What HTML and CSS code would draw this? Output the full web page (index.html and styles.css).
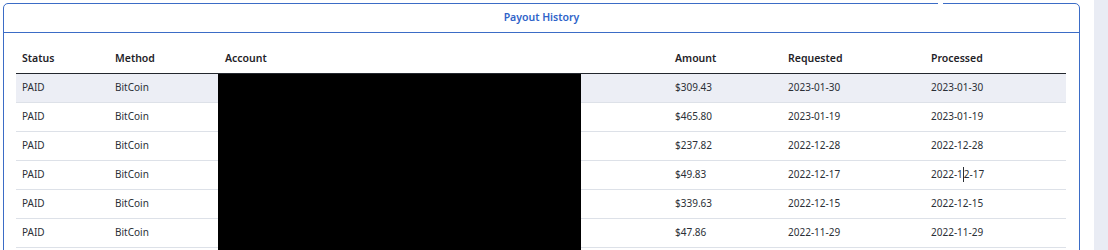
FILE: index.html
```html
<!DOCTYPE html>
<html>
<head>
<meta charset="utf-8">
<link rel="stylesheet" href="styles.css">
</head>
<body>
<div class="page">
  <section class="card">
    <header class="card-head">Payout History</header>
    <div class="card-body">
      <div class="table-wrap">
        <table class="payouts">
          <colgroup>
            <col class="c-status"><col class="c-method"><col class="c-account"><col class="c-amount"><col class="c-req"><col class="c-proc">
          </colgroup>
          <thead>
            <tr><th>Status</th><th>Method</th><th>Account</th><th>Amount</th><th>Requested</th><th>Processed</th></tr>
          </thead>
          <tbody>
            <tr class="hover"><td>PAID</td><td>BitCoin</td><td></td><td>$309.43</td><td>2023-01-30</td><td>2023-01-30</td></tr>
            <tr><td>PAID</td><td>BitCoin</td><td></td><td>$465.80</td><td>2023-01-19</td><td>2023-01-19</td></tr>
            <tr><td>PAID</td><td>BitCoin</td><td></td><td>$237.82</td><td>2022-12-28</td><td>2022-12-28</td></tr>
            <tr><td>PAID</td><td>BitCoin</td><td></td><td>$49.83</td><td>2022-12-17</td><td>2022-1<span class="caret"></span>2-17</td></tr>
            <tr><td>PAID</td><td>BitCoin</td><td></td><td>$339.63</td><td>2022-12-15</td><td>2022-12-15</td></tr>
            <tr><td>PAID</td><td>BitCoin</td><td></td><td>$47.86</td><td>2022-11-29</td><td>2022-11-29</td></tr>
          </tbody>
        </table>
        <div class="redact"></div>
      </div>
    </div>
  </section>
  <aside class="side"></aside>
</div>
</body>
</html>
```

FILE: styles.css
```css
html, body {
  margin: 0;
  padding: 0;
  background: #ffffff;
  overflow: hidden;
  height: 250px;
}
body {
  font-family: "Noto Sans", "Open Sans", sans-serif;
  font-size: 10px;
  color: #2b2f36;
}
.page {
  display: flex;
  align-items: flex-start;
  height: 250px;
}
.card {
  position: relative;
  margin: 3px 0 0 3px;
  width: 1077px;
  box-sizing: border-box;
  border: 1px solid #3b6cc6;
  border-radius: 5px;
  flex: none;
}
.card::after {
  content: "";
  position: absolute;
  top: -1px;
  left: 934px;
  width: 5px;
  height: 1px;
  background: #ffffff;
}
.card-head {
  height: 28px;
  line-height: 26px;
  text-align: center;
  font-weight: 600;
  font-size: 10.5px;
  color: #2f63c9;
  border-bottom: 1px solid #3b6cc6;
}
.card-body {
  padding: 9px 13px 14px 12px;
}
.table-wrap {
  position: relative;
}
.payouts {
  width: 1050px;
  table-layout: fixed;
  border-collapse: collapse;
}
.c-status { width: 93px; }
.c-method { width: 110px; }
.c-account { width: 450px; }
.c-amount { width: 113px; }
.c-req { width: 143px; }
.c-proc { width: 141px; }
.payouts th {
  text-align: left;
  font-weight: 600;
  font-size: 10.5px;
  color: #1f2328;
  height: 31px;
  padding: 0 6px;
  vertical-align: middle;
  border-bottom: 1px solid #23272e;
}
.payouts td {
  height: 29px;
  padding: 0 6px 2px;
  box-sizing: border-box;
  vertical-align: middle;
  border-bottom: 1px solid #dde1e8;
  white-space: nowrap;
}
.payouts tr.hover td {
  background: #eceef5;
}
.caret {
  display: inline-block;
  width: 1px;
  height: 15px;
  background: #2b2f36;
  vertical-align: -4px;
}
.redact {
  position: absolute;
  left: 202px;
  width: 363px;
  top: 32px;
  bottom: -20px;
  background: #000000;
}
.side {
  margin-left: 14px;
  flex: 1;
  height: 250px;
  background: #e9ecf4;
}
```
